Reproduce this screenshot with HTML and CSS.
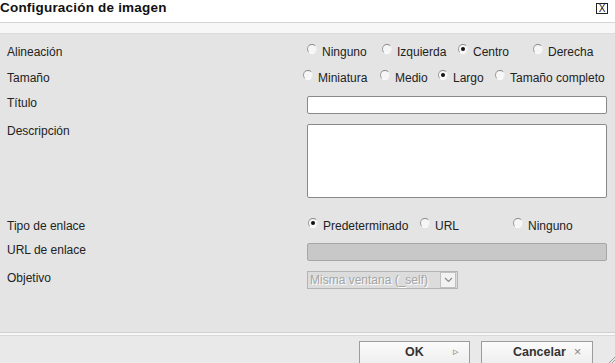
FILE: index.html
```html
<!DOCTYPE html>
<html lang="es">
<head>
<meta charset="utf-8">
<title>Configuración de imagen</title>
<link rel="stylesheet" href="styles.css">
</head>
<body>
<div class="dialog">
  <header class="titlebar">
    <h1 class="title">Configuración de imagen</h1>
    <button class="close" type="button">X</button>
  </header>
  <div class="subbar"></div>
  <main class="form">
    <div class="row r-align">
      <div class="label">Alineación</div>
      <div class="opts opts-align">
        <label class="opt"><input type="radio" name="align" class="radio">Ninguno</label>
        <label class="opt"><input type="radio" name="align" class="radio">Izquierda</label>
        <label class="opt"><input type="radio" name="align" class="radio" checked>Centro</label>
        <label class="opt"><input type="radio" name="align" class="radio">Derecha</label>
      </div>
    </div>
    <div class="row r-size">
      <div class="label">Tamaño</div>
      <div class="opts opts-size">
        <label class="opt"><input type="radio" name="size" class="radio">Miniatura</label>
        <label class="opt"><input type="radio" name="size" class="radio">Medio</label>
        <label class="opt"><input type="radio" name="size" class="radio" checked>Largo</label>
        <label class="opt"><input type="radio" name="size" class="radio">Tamaño completo</label>
      </div>
    </div>
    <div class="row r-title">
      <div class="label">Título</div>
      <input type="text" class="field text-field">
    </div>
    <div class="row r-desc">
      <div class="label">Descripción</div>
      <textarea class="field area-field"></textarea>
    </div>
    <div class="row r-link">
      <div class="label">Tipo de enlace</div>
      <div class="opts opts-link">
        <label class="opt"><input type="radio" name="link" class="radio" checked>Predeterminado</label>
        <label class="opt"><input type="radio" name="link" class="radio">URL</label>
        <label class="opt"><input type="radio" name="link" class="radio">Ninguno</label>
      </div>
    </div>
    <div class="row r-url">
      <div class="label">URL de enlace</div>
      <input type="text" class="field url-field" disabled>
    </div>
    <div class="row r-target">
      <div class="label">Objetivo</div>
      <div class="select">
        <span class="select-text">Misma ventana (_self)</span>
        <span class="select-btn">
          <svg width="9" height="6" viewBox="0 0 9 6"><path d="M1 1 L4.5 4.5 L8 1" fill="none" stroke="#8a8a8a" stroke-width="1.2"/></svg>
        </span>
      </div>
    </div>
  </main>
  <footer class="footer">
    <button class="btn btn-ok" type="button"><span>OK</span><span class="btn-icon">&#9657;</span></button>
    <button class="btn btn-cancel" type="button"><span>Cancelar</span><span class="btn-icon x">&#215;</span></button>
    <svg class="grip" width="7" height="7" viewBox="0 0 7 7"><path d="M7 1 L1 7 M7 4 L4 7" stroke="#9a9a9a" stroke-width="1"/></svg>
  </footer>
</div>
</body>
</html>
```
FILE: styles.css
```css
* { box-sizing: border-box; }
html, body {
  margin: 0;
  padding: 0;
  width: 615px;
  height: 363px;
  overflow: hidden;
  background: #e4e4e4;
  font-family: "Liberation Sans", Arial, sans-serif;
  font-size: 12px;
  color: #222;
}
.dialog {
  width: 615px;
  height: 363px;
  display: flex;
  flex-direction: column;
  position: relative;
}
.titlebar {
  height: 23px;
  background: #fff;
  border-bottom: 1px solid #d6d6d6;
  display: flex;
  align-items: flex-start;
  justify-content: space-between;
}
.title {
  margin: 0;
  font-size: 13.5px;
  font-weight: bold;
  line-height: 15px;
  color: #111;
  letter-spacing: 0.2px;
}
.close {
  margin: 3px 7px 0 0;
  width: 12px;
  height: 11px;
  padding: 0;
  border: 1px solid #222;
  background: #fff;
  font-family: "Liberation Sans", Arial, sans-serif;
  font-size: 10px;
  line-height: 9px;
  color: #111;
  text-align: center;
}
.subbar {
  height: 11px;
  background: #f7f7f7;
  border-bottom: 1px solid #dcdcdc;
}
.form {
  flex: 1;
  padding-top: 9px;
  border-bottom: 1px solid #cfcfcf;
}
.row {
  display: flex;
  align-items: flex-start;
}
.label {
  width: 303px;
  padding-left: 7px;
  padding-top: 1px;
  line-height: 16px;
  flex: none;
}
.r-align { height: 26px; }
.r-size { height: 25px; }
.r-title { height: 28px; }
.r-desc { height: 75px; }
.r-link { height: 24px; margin-top: 20px; }
.r-url { height: 28px; }
.r-target { height: 28px; }

.opts { display: grid; line-height: 16px; padding-top: 1px; }
.opts-align { padding-left: 4px; grid-template-columns: 75px 76px 75px auto; }
.opts-size { padding-left: 0; grid-template-columns: 77px 58px 57px auto; }
.opts-link { padding-left: 5px; grid-template-columns: 112px 93px auto; }
.opt {
  display: flex;
  align-items: flex-start;
  white-space: nowrap;
}
.radio {
  appearance: none;
  -webkit-appearance: none;
  margin: 0 5px 0 0;
  width: 10px;
  height: 10px;
  border-radius: 50%;
  border: 1px solid;
  border-color: #8a8a8a #ececec #ffffff #9a9a9a;
  background: #f6f6f6;
  position: relative;
  flex: none;
}
.radio:checked::after {
  content: "";
  position: absolute;
  left: 2px;
  top: 2px;
  width: 4px;
  height: 4px;
  border-radius: 50%;
  background: #111;
}
.field {
  margin: 2px 0 0 4px;
  width: 300px;
  border: 1px solid #8a8a8a;
  border-radius: 2px;
  background: #fff;
  padding: 0;
  font: inherit;
}
.text-field { height: 18px; }
.area-field { height: 74px; resize: none; display: block; }
.url-field {
  height: 18px;
  background: #c8c8c8;
  border-color: #a6a6a6;
}
.select {
  margin: 2px 0 0 4px;
  width: 151px;
  height: 18px;
  border: 1px solid #b4b4b4;
  background: #dcdcdc;
  display: flex;
  align-items: center;
  justify-content: space-between;
}
.select-text {
  padding-left: 2px;
  color: #a4a4a4;
  text-shadow: 1px 1px 0 #fff;
  line-height: 16px;
}
.select-btn {
  width: 16px;
  height: 16px;
  margin-right: 1px;
  border: 1px solid #c0c0c0;
  background: #f2f2f2;
  display: flex;
  align-items: center;
  justify-content: center;
}
.footer {
  height: 30px;
  border-top: 2px solid #f8f8f8;
  box-shadow: inset 0 1px 0 #d8d8d8;
  background: #e9e9e9;
  display: flex;
  align-items: flex-start;
  padding: 6px 0 0 359px;
  gap: 11px;
  position: relative;
}
.btn {
  width: 111px;
  height: 25px;
  border: 1px solid #9c9c9c;
  background: linear-gradient(#fbfbfb, #ededed);
  font-family: "Liberation Sans", Arial, sans-serif;
  font-weight: bold;
  font-size: 12.5px;
  color: #333;
  display: flex;
  align-items: center;
  padding: 0 0 4px 0;
  position: relative;
}
.btn-ok span:first-child { margin-left: 45px; }
.btn-ok .btn-icon { margin-left: 29px; color: #888; font-weight: normal; font-size: 11px; }
.btn-cancel span:first-child { margin-left: 31px; }
.btn-cancel .btn-icon { margin-left: 8px; color: #888; font-weight: normal; font-size: 13px; }
.btn-cancel { width: 112px; }
.grip {
  position: absolute;
  right: 0;
  bottom: 0;
}
```
